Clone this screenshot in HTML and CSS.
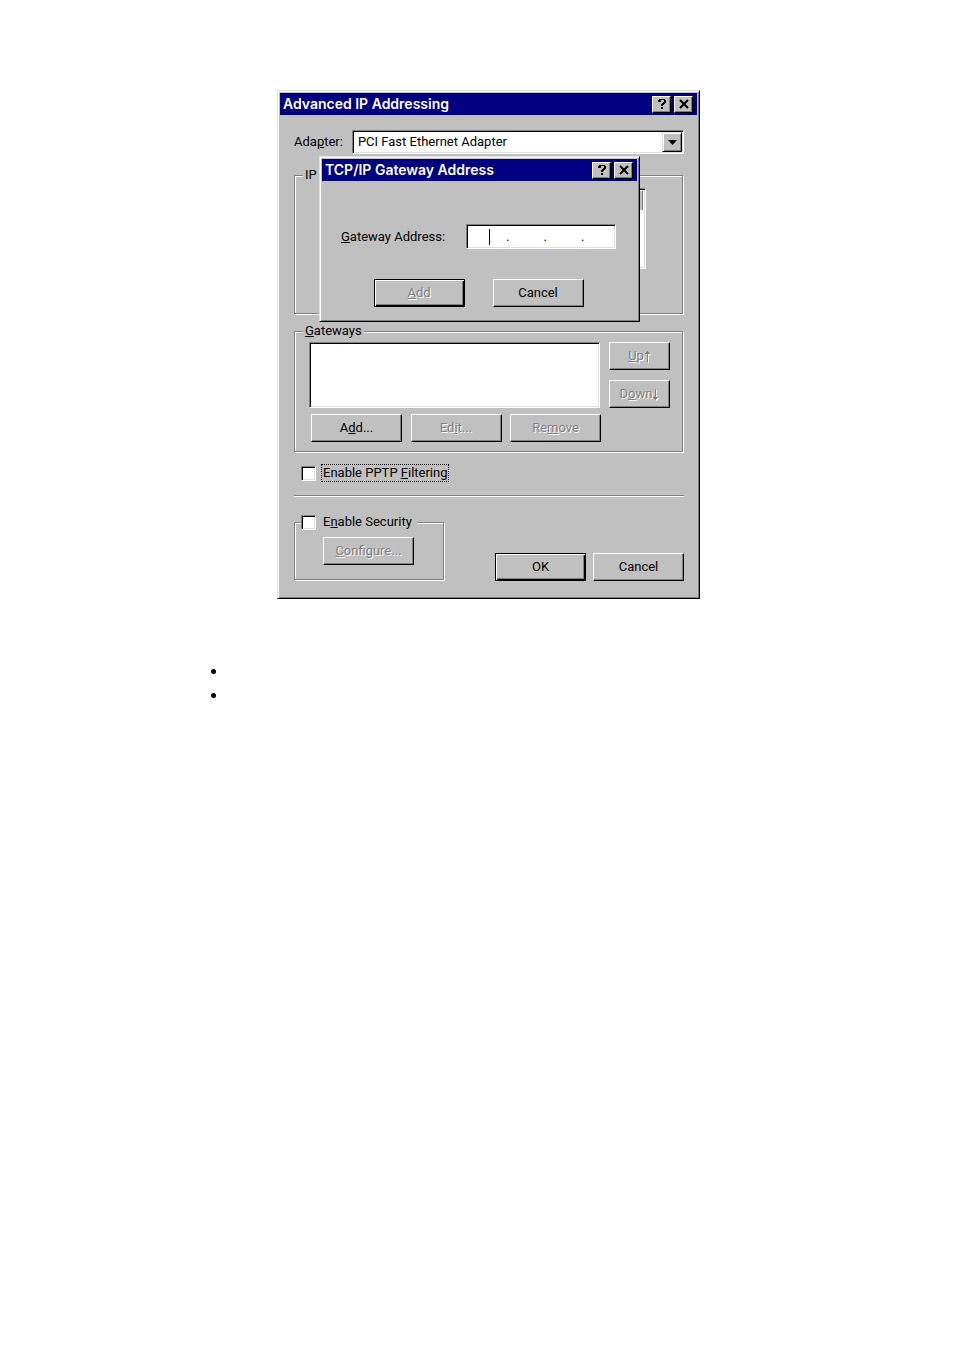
FILE: index.html
```
<!DOCTYPE html>
<html lang="en">
<head>
    <title>Advanced IP Addressing</title>
    <meta charset="UTF-8">
    <meta name="viewport" content="width=device-width, initial-scale=1.0">
    <link rel="stylesheet" href="styles.css">
</head>
<body>
    <main class="page">
        <section class="window" aria-label="Advanced IP Addressing">
            <header class="titlebar">
                <h1>Advanced IP Addressing</h1>
                <button class="caption-btn" aria-label="Help">
                    <svg width="10" height="10" viewBox="0 0 10 10" shape-rendering="crispEdges"><path d="M2 0h6v1h1v3h-1v1h-1v1h-1v1h-2v-2h1v-1h1v-1h1v-2h-3v2h-3v-2h1zM4 8h2v2h-2z"/></svg>
                </button>
                <button class="caption-btn close" aria-label="Close">
                    <svg width="10" height="10" viewBox="0 0 10 10"><path d="M1 1l8 8M9 1l-8 8" stroke="#000" stroke-width="2"/></svg>
                </button>
            </header>

            <div class="window-body">
                <div class="adapter-row">
                    <label for="adapter">Ada<u>p</u>ter:</label>
                    <div class="dropdown">
                        <select id="adapter">
                            <option>PCI Fast Ethernet Adapter</option>
                        </select>
                        <span class="dropdown-arrow">
                            <svg width="9" height="5" viewBox="0 0 9 5"><path d="M0 0h9L4.500 5z"/></svg>
                        </span>
                    </div>
                </div>

                <fieldset class="group addresses">
                    <legend>IP</legend>
                    <div class="address-list">
                        <div class="list-header"></div>
                    </div>
                </fieldset>

                <fieldset class="group gateways">
                    <legend><u>G</u>ateways</legend>
                    <div class="gateway-main">
                        <div class="listbox" role="listbox" aria-label="Gateways"></div>
                        <div class="button-row">
                            <button class="btn">A<u>d</u>d...</button>
                            <button class="btn" disabled>Ed<u>i</u>t...</button>
                            <button class="btn" disabled>Re<u>m</u>ove</button>
                        </div>
                    </div>
                    <div class="gateway-order">
                        <button class="btn" disabled><u>U</u>p<svg width="7" height="11" viewBox="0 0 7 11"><path d="M3 11V3H1V2h1V1h1V0h1v1h1v1h1v1H4v8z" fill="#808080"/></svg></button>
                        <button class="btn" disabled>D<u>o</u>wn<svg width="7" height="11" viewBox="0 0 7 11"><path d="M3 0v8H1v1h1v1h1v1h1v-1h1V9h1V8H4V0z" fill="#808080"/></svg></button>
                    </div>
                </fieldset>

                <div class="check-row">
                    <input type="checkbox" id="pptp">
                    <label for="pptp" class="focused">Enable PPTP <u>F</u>iltering</label>
                </div>

                <hr>

                <div class="footer">
                    <fieldset class="group security">
                        <legend>
                            <input type="checkbox" id="security">
                            <label for="security">E<u>n</u>able Security</label>
                        </legend>
                        <button class="btn" disabled><u>C</u>onfigure...</button>
                    </fieldset>
                    <div class="button-row">
                        <button class="btn default">OK</button>
                        <button class="btn">Cancel</button>
                    </div>
                </div>
            </div>

            <section class="window dialog" role="dialog" aria-label="TCP/IP Gateway Address">
                <header class="titlebar">
                    <h2>TCP/IP Gateway Address</h2>
                    <button class="caption-btn" aria-label="Help">
                        <svg width="10" height="10" viewBox="0 0 10 10" shape-rendering="crispEdges"><path d="M2 0h6v1h1v3h-1v1h-1v1h-1v1h-2v-2h1v-1h1v-1h1v-2h-3v2h-3v-2h1zM4 8h2v2h-2z"/></svg>
                    </button>
                    <button class="caption-btn close" aria-label="Close">
                        <svg width="10" height="10" viewBox="0 0 10 10"><path d="M1 1l8 8M9 1l-8 8" stroke="#000" stroke-width="2"/></svg>
                    </button>
                </header>
                <div class="dialog-body">
                    <div class="address-row">
                        <label for="octet1"><u>G</u>ateway Address:</label>
                        <div class="ip-field">
                            <div class="octet">
                                <input type="text" id="octet1">
                                <span class="caret"></span>
                            </div>
                            <span>.</span>
                            <input type="text" aria-label="Second number">
                            <span>.</span>
                            <input type="text" aria-label="Third number">
                            <span>.</span>
                            <input type="text" class="last" aria-label="Fourth number">
                        </div>
                    </div>
                    <div class="button-row">
                        <button class="btn default" disabled><u>A</u>dd</button>
                        <button class="btn">Cancel</button>
                    </div>
                </div>
            </section>
        </section>

        <ul class="notes">
            <li></li>
            <li></li>
        </ul>
    </main>
</body>
</html>
```

FILE: styles.css
```
* {
    box-sizing: border-box;
}
body {
    margin: 0;
    background: #fff;
    color: #000;
    font-family: Roboto, "Liberation Sans", sans-serif;
    font-size: 13px;
    line-height: 16px;
}
.page {
    padding: 90px 0 40px 23px;
}
.window {
    position: relative;
    width: 423px;
    margin: 0 auto;
    background: #c0c0c0;
    border: 1px solid;
    border-color: #dfdfdf #000 #000 #dfdfdf;
    box-shadow: inset 1px 1px #fff, inset -1px -1px #808080;
    padding: 2px;
}
.titlebar {
    display: flex;
    align-items: center;
    height: 22px;
    padding: 0 4px 0 3px;
    background: #000080;
    color: #fff;
}
.titlebar h1,
.titlebar h2 {
    flex: 1;
    margin: 0;
    font: 600 14px/22px Inter, "Liberation Sans", sans-serif;
}
.caption-btn {
    display: flex;
    align-items: center;
    justify-content: center;
    width: 19px;
    height: 17px;
    padding: 0;
    background: #c0c0c0;
    border: 1px solid;
    border-color: #fff #000 #000 #fff;
    box-shadow: inset -1px -1px #808080;
}
.caption-btn.close {
    margin-left: 3px;
}
.window-body {
    padding: 15px 13px 15px 14px;
}

/* adapter drop-down */
.adapter-row {
    display: flex;
    align-items: center;
    gap: 9px;
}
.dropdown {
    position: relative;
    flex: 1;
}
select {
    display: block;
    appearance: none;
    width: 100%;
    height: 24px;
    padding: 0 22px 0 5px;
    font: inherit;
    color: #000;
    background: #fff;
    border: 1px solid;
    border-radius: 0;
    border-color: #808080 #fff #fff #808080;
    box-shadow: inset 1px 1px #000, inset -1px -1px #dfdfdf;
}
.dropdown-arrow {
    position: absolute;
    top: 2px;
    right: 2px;
    bottom: 2px;
    display: flex;
    align-items: center;
    justify-content: center;
    width: 20px;
    background: #c0c0c0;
    border: 1px solid;
    border-color: #dfdfdf #000 #000 #dfdfdf;
    box-shadow: inset 1px 1px #fff, inset -1px -1px #808080;
    pointer-events: none;
}

/* group boxes */
.group {
    margin: 0 1px 1px 0;
    border: 1px solid #808080;
    box-shadow: 1px 1px #fff, inset 1px 1px #fff;
}
.group legend {
    padding: 0 2px;
    background: #c0c0c0;
}
.addresses {
    margin-top: 13px;
    padding: 5px 36px 44px 36px;
}
.addresses legend {
    margin-left: -28px;
}
.gateways legend {
    margin-left: -6px;
}
.address-list,
.listbox {
    background: #fff;
    border: 1px solid;
    border-color: #808080 #fff #fff #808080;
    box-shadow: inset 1px 1px #000, inset -1px -1px #dfdfdf;
}
.address-list {
    height: 81px;
    padding: 2px;
}
.list-header {
    height: 19px;
    background: #c0c0c0;
    border-right: 1px solid #808080;
}
.group.gateways {
    display: flex;
    gap: 9px;
    margin-top: 9px;
    padding: 3px 12px 9px 14px;
}
.gateway-main {
    flex: 1;
}
.listbox {
    height: 66px;
    margin-bottom: 6px;
}
.gateway-main .button-row {
    margin: 0 -1px 0 2px;
}
.gateway-order {
    display: flex;
    flex-direction: column;
    gap: 10px;
}
.gateway-order .btn {
    width: 61px;
}
.button-row {
    display: flex;
    justify-content: space-between;
}
.btn {
    display: flex;
    align-items: center;
    justify-content: center;
    width: 91px;
    height: 28px;
    padding: 0;
    font: inherit;
    color: #000;
    background: #c0c0c0;
    border: 1px solid;
    border-color: #fff #000 #000 #fff;
    box-shadow: inset -1px -1px #808080;
}
.btn.default {
    border-color: #000;
    box-shadow: inset 1px 1px #fff, inset -1px -1px #000, inset -2px -2px #808080;
}
.btn:disabled {
    color: #808080;
    text-shadow: 1px 1px #fff;
}
.btn svg {
    filter: drop-shadow(1px 1px 0 #fff);
}

/* check boxes */
.check-row {
    display: flex;
    align-items: center;
    gap: 5px;
    margin-top: 12px;
    padding-left: 7px;
}
input[type="checkbox"] {
    appearance: none;
    flex: none;
    width: 15px;
    height: 15px;
    margin: 0;
    background: #fff;
    border: 1px solid;
    border-color: #808080 #fff #fff #808080;
    box-shadow: inset 1px 1px #000, inset -1px -1px #dfdfdf;
}
.focused {
    border: 1px dotted #000;
    padding-left: 1px;
}
hr {
    height: 2px;
    margin: 13px 0 17px;
    border: 0;
    border-top: 1px solid #808080;
    background: #fff;
}
.footer {
    display: flex;
    justify-content: space-between;
    align-items: flex-end;
}
.security {
    width: 150px;
    padding: 7px 0 14px 28px;
}
.security legend {
    display: flex;
    align-items: center;
    gap: 7px;
    margin-left: -22px;
    padding: 0 5px 0 0;
}
.footer .button-row {
    gap: 7px;
}

/* gateway address dialog */
.dialog {
    position: absolute;
    top: 65px;
    left: 41px;
    width: 321px;
}
.dialog-body {
    padding: 43px 21px 12px 19px;
}
.address-row {
    display: flex;
    align-items: center;
    justify-content: space-between;
}
.ip-field {
    display: flex;
    align-items: center;
    width: 150px;
    height: 25px;
    padding: 3px 2px;
    background: #fff;
    border: 1px solid;
    border-color: #808080 #fff #fff #808080;
    box-shadow: inset 1px 1px #000, inset -1px -1px #dfdfdf;
}
.octet {
    display: flex;
    width: 37px;
}
.ip-field input {
    width: 34px;
    height: 16px;
    padding: 0;
    border: 0;
    font: inherit;
}
.ip-field .octet input {
    width: 20px;
}
.ip-field .last {
    flex: 1;
    min-width: 0;
}
.caret {
    width: 1px;
    height: 16px;
    background: #000;
}
.dialog-body .button-row {
    justify-content: center;
    gap: 28px;
    margin-top: 30px;
}

.notes {
    margin: 60px 0 0 164px;
    padding-left: 40px;
    font: 16px/24px "Liberation Serif", serif;
}
```
